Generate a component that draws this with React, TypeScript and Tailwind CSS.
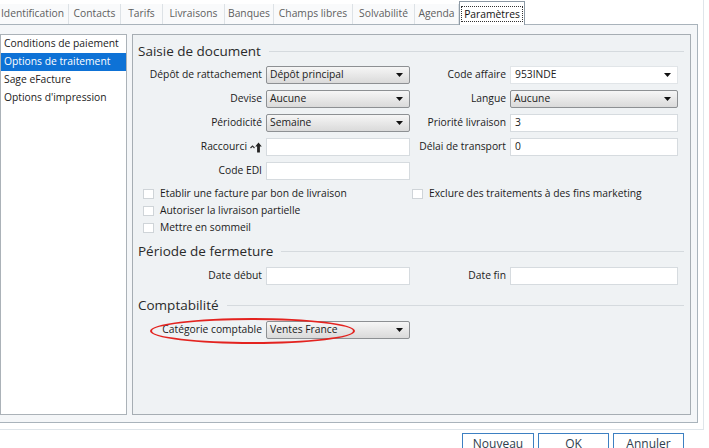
import React from 'react'

const tabs = [
    { label: 'Identification', w: 'w-[72px]' },
    { label: 'Contacts', w: 'w-[52px]' },
    { label: 'Tarifs', w: 'w-[42px]' },
    { label: 'Livraisons', w: 'w-[62px]' },
    { label: 'Banques', w: 'w-[49px]' },
    { label: 'Champs libres', w: 'w-[79px]' },
    { label: 'Solvabilité', w: 'w-[62px]' },
    { label: 'Agenda', w: 'w-[44px]' },
]

const menu = ['Conditions de paiement', 'Options de traitement', 'Sage eFacture', "Options d'impression"]

const Arrow = () => (
    <svg width="7" height="4" viewBox="0 0 7 4" className="shrink-0">
        <path d="M0 0h7L3.5 4z" fill="#111" />
    </svg>
)

function GraySelect({ value }: { value: string }) {
    return (
        <div className="flex h-[18px] items-center justify-between rounded-[2px] border border-[#8d9093] bg-linear-to-b from-[#f6f6f6] to-[#dadada] pl-[3px] pr-[6px]">
            <span>{value}</span>
            <Arrow />
        </div>
    )
}

function WhiteCombo({ value }: { value: string }) {
    return (
        <div className="flex h-[18px] items-center justify-between border border-[#e1e5e8] bg-white pl-[4px] pr-[6px]">
            <span>{value}</span>
            <Arrow />
        </div>
    )
}

function TextInput({ value = '' }: { value?: string }) {
    return <div className="flex h-[18px] items-center border border-[#d6dbdf] bg-white pl-[4px]">{value}</div>
}

function Label({ children }: { children: React.ReactNode }) {
    return <div className="flex h-[18px] items-center justify-end whitespace-nowrap">{children}</div>
}

function Check({ label }: { label: string }) {
    return (
        <div className="flex h-[17px] items-center whitespace-nowrap">
            <div className="h-[10px] w-[11px] border border-[#cfd4d8] bg-white" />
            <span className="ml-[6px]">{label}</span>
        </div>
    )
}

function Section({ title }: { title: string }) {
    return (
        <div className="flex h-[20px] items-center pl-[5px] pr-[6px]">
            <span className="text-[13.5px] leading-[20px] text-[#2a2a2a]">{title}</span>
            <div className="ml-[8px] h-px flex-1 bg-[#d5dade]" />
        </div>
    )
}

export default function App() {
    return (
        <div className="relative h-[448px] w-[709px] overflow-hidden bg-white font-['Open_Sans',sans-serif] text-[10.3px] text-[#1b1b1b]">
            <div className="w-[704px] border-r border-b border-[#dfe5ea] pb-[6px]">
                {/* Tabs */}
                <div className="relative z-10 ml-[-3px] flex h-[24px] items-end">
                    {tabs.map((t) => (
                        <div
                            key={t.label}
                            className={`${t.w} flex h-[20px] items-center justify-center whitespace-nowrap border-r border-[#dde2e6] bg-[#f9fafb] text-[#5e5e5e]`}
                        >
                            {t.label}
                        </div>
                    ))}
                    <div className="mb-[-1px] flex h-[24px] w-[66px] items-center justify-center border border-b-0 border-[#8d9aa5] bg-white">
                        <span className="border border-dotted border-[#333] px-[2px] leading-[14px] text-[#111]">Paramètres</span>
                    </div>
                </div>

                {/* Tab frame */}
                <div className="ml-[-6px] flex h-[399px] w-[704px] gap-[5px] border border-[#a9b3bb] bg-[#f4f6f8] pt-[9px] pr-[6px] pb-[7px] pl-[5px]">
                    {/* Left list */}
                    <div className="w-[127px] border border-[#abb2b8] bg-white">
                        {menu.map((m, i) => (
                            <div
                                key={m}
                                className={`flex h-[18px] items-center whitespace-nowrap pl-[3px] ${i === 1 ? 'bg-[#0e72d6] text-white' : 'text-[#1b1b1b]'}`}
                            >
                                {m}
                            </div>
                        ))}
                    </div>

                    {/* Right panel */}
                    <div className="relative w-[559px] border border-[#a6adb3] bg-[#eff2f4] pt-[6px]">
                        <Section title="Saisie de document" />
                        <div className="mt-[5px] grid grid-cols-[129px_144px_92px_168px] gap-x-[4px] gap-y-[6px]">
                            <Label>Dépôt de rattachement</Label>
                            <GraySelect value="Dépôt principal" />
                            <Label>Code affaire</Label>
                            <WhiteCombo value="953INDE" />

                            <Label>Devise</Label>
                            <GraySelect value="Aucune" />
                            <Label>Langue</Label>
                            <GraySelect value="Aucune" />

                            <Label>Périodicité</Label>
                            <GraySelect value="Semaine" />
                            <Label>Priorité livraison</Label>
                            <TextInput value="3" />

                            <Label>
                                Raccourci
                                <svg width="12" height="11" viewBox="0 0 12 11" className="ml-[3px]">
                                    <path d="M0.5 6L2.5 4L4.5 6" fill="none" stroke="#333" strokeWidth="1.2" />
                                    <path d="M8.5 0.5L11.8 4.5H9.9V10.5H7.1V4.5H5.2Z" fill="#222" />
                                </svg>
                            </Label>
                            <TextInput />
                            <Label>Délai de transport</Label>
                            <TextInput value="0" />

                            <Label>Code EDI</Label>
                            <TextInput />
                            <div />
                            <div />
                        </div>

                        <div className="mt-[5px] grid grid-cols-[269px_1fr] pl-[10px]">
                            <Check label="Etablir une facture par bon de livraison" />
                            <Check label="Exclure des traitements à des fins marketing" />
                            <Check label="Autoriser la livraison partielle" />
                            <div />
                            <Check label="Mettre en sommeil" />
                        </div>

                        <div className="mt-[5px]">
                            <Section title="Période de fermeture" />
                        </div>
                        <div className="mt-[6px] grid grid-cols-[129px_144px_92px_168px] gap-x-[4px]">
                            <Label>Date début</Label>
                            <TextInput />
                            <Label>Date fin</Label>
                            <TextInput />
                        </div>

                        <div className="mt-[10px]">
                            <Section title="Comptabilité" />
                        </div>
                        <div className="mt-[6px] grid grid-cols-[129px_144px] gap-x-[4px]">
                            <Label>Catégorie comptable</Label>
                            <GraySelect value="Ventes France" />
                        </div>

                        {/* annotation ellipse */}
                        <div className="pointer-events-none absolute top-[283px] left-[17px] h-[26px] w-[205px] rounded-[50%] border-2 border-[#e3231f]" />
                    </div>
                </div>
            </div>

            {/* Buttons */}
            <div className="mt-[3px] flex justify-end gap-[4px] pr-[25px]">
                {['Nouveau', 'OK', 'Annuler'].map((b, i) => (
                    <div
                        key={b}
                        className={`${i === 0 ? 'w-[72px]' : 'w-[71px]'} flex h-[24px] items-start justify-center border border-[#3d80c2] bg-white pt-[3px] text-[12px] leading-[14px] text-[#2f3e4d]`}
                    >
                        {b}
                    </div>
                ))}
            </div>
        </div>
    )
}
